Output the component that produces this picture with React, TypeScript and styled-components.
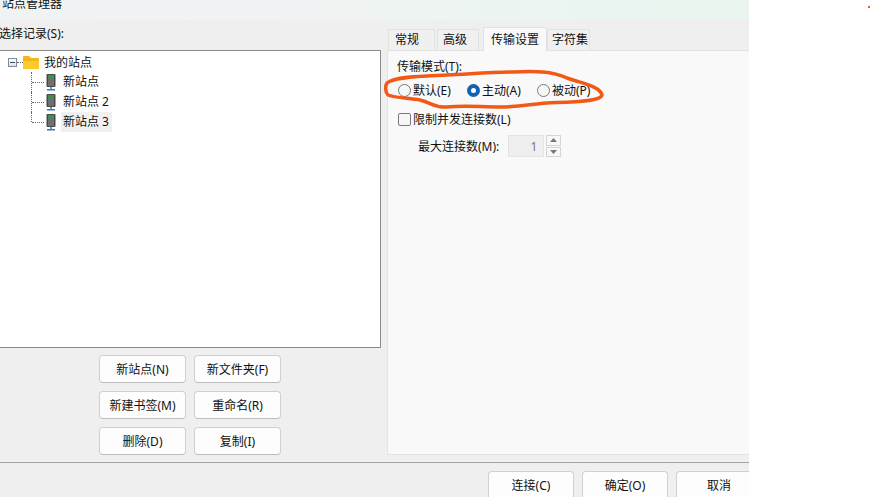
import React from "react";
import styled, { createGlobalStyle } from "styled-components";

const Global = createGlobalStyle`
  html, body { margin: 0; padding: 0; background: #fff; }
  body { font-family: "Noto Sans", "Noto Sans CJK SC", sans-serif; font-size: 12px; color: #111; }
  #root { width: 871px; height: 497px; overflow: hidden; }
`;

const Page = styled.div`
  position: relative;
  width: 871px;
  height: 497px;
  overflow: hidden;
  background: #fff;
`;
const Win = styled.div`
  width: 749px;
  height: 497px;
  display: flex;
  flex-direction: column;
  background: #efefef;
`;
const TitleBar = styled.div`
  height: 20px;
  flex: none;
  display: flex;
  align-items: center;
  padding-left: 2px;
  font-size: 12px;
  line-height: 10px;
  background: linear-gradient(90deg, #f0f3f3 0%, #eff4f3 50%, #e9f5f0 85%, #ebf5ef 100%);
  overflow: hidden;
  & > span { margin-top: -12px; }
`;
const Body = styled.div`
  height: 443px;
  flex: none;
  display: flex;
  border-bottom: 1px solid #a4a4a4;
  box-sizing: border-box;
`;
const LeftCol = styled.div`
  width: 381px;
  flex: none;
  display: flex;
  flex-direction: column;
`;
const RecLabel = styled.div`
  height: 30px;
  line-height: 28px;
  flex: none;
  margin-left: -1px;
`;
const TreeBox = styled.div`
  height: 298px;
  flex: none;
  box-sizing: border-box;
  background: #fff;
  border-top: 1px solid #8a8a8a;
  border-right: 1px solid #8a8a8a;
  border-bottom: 1px solid #8a8a8a;
  padding-top: 1px;
`;
const RootRow = styled.div`
  height: 20px;
  display: flex;
  align-items: center;
  padding-left: 8px;
`;
const ExpandBox = styled.span`
  width: 7px;
  height: 7px;
  flex: none;
  border: 1px solid #7f8a99;
  background: linear-gradient(#fff, #dde2e8);
  display: flex;
  align-items: center;
  justify-content: center;
  &::after { content: ""; width: 5px; height: 1px; background: #3c4a60; }
`;
const HDots = styled.span`
  width: 6px;
  border-top: 1px dotted #666;
  flex: none;
`;
const ChildRow = styled.div<{ $last?: boolean }>`
  position: relative;
  height: 20px;
  display: flex;
  align-items: center;
  padding-left: 45px;
  &::before {
    content: "";
    position: absolute;
    left: 31px;
    top: 0;
    height: ${(p) => (p.$last ? "10px" : "20px")};
    border-left: 1px dotted #666;
  }
  &::after {
    content: "";
    position: absolute;
    left: 32px;
    top: 10px;
    width: 12px;
    border-top: 1px dotted #666;
  }
`;
const NodeLabel = styled.span<{ $sel?: boolean }>`
  margin-left: 4px;
  padding: 0 3px 0 2px;
  height: 20px;
  line-height: 19px;
  background: ${(p) => (p.$sel ? "#f0f0f0" : "transparent")};
`;
const RootLabel = styled.span`
  margin-left: 5px;
  line-height: 19px;
`;
const ButtonGrid = styled.div`
  display: grid;
  grid-template-columns: 87px 87px;
  grid-auto-rows: 28px;
  gap: 8px;
  padding: 7px 0 0 99px;
`;
const Btn = styled.div`
  box-sizing: border-box;
  border: 1px solid #d0d0d0;
  border-bottom-color: #bdbdbd;
  border-radius: 4px;
  background: #fdfdfd;
  display: flex;
  align-items: center;
  justify-content: center;
  white-space: nowrap;
`;
const RightCol = styled.div`
  margin-left: 6px;
  flex: 1;
  display: flex;
  flex-direction: column;
`;
const Tabs = styled.div`
  height: 30px;
  flex: none;
  display: flex;
  align-items: flex-end;
  padding-left: 1px;
`;
const Tab = styled.div<{ $active?: boolean; $w: number; $gap?: number; $pad: number }>`
  width: ${(p) => p.$w}px;
  height: ${(p) => (p.$active ? 24 : 21)}px;
  box-sizing: border-box;
  background: ${(p) => (p.$active ? "#f9f9f9" : "#f0f0f0")};
  border: 1px solid #e2e2e2;
  border-bottom: none;
  margin-left: ${(p) => p.$gap ?? 0}px;
  padding-left: ${(p) => p.$pad}px;
  display: flex;
  align-items: center;
  line-height: 18px;
  position: relative;
  z-index: ${(p) => (p.$active ? 1 : 0)};
  margin-bottom: ${(p) => (p.$active ? -1 : 0)}px;
  white-space: nowrap;
`;
const TabPanel = styled.div`
  height: 405px;
  flex: none;
  box-sizing: border-box;
  background: #f9f9f9;
  border-top: 1px solid #e2e2e2;
  border-bottom: 1px solid #e2e2e2;
  border-left: 1px solid #e6e6e6;
  padding: 7px 0 0 10px;
  display: flex;
  flex-direction: column;
`;
const GroupLabel = styled.div`
  height: 18px;
  line-height: 17px;
  margin-left: -1px;
`;
const RadioRow = styled.div`
  display: flex;
  align-items: center;
  margin-top: 5px;
  height: 18px;
`;
const RadioItem = styled.div<{ $w: number }>`
  width: ${(p) => p.$w}px;
  display: flex;
  align-items: center;
  gap: 2px;
  white-space: nowrap;
`;
const Radio = styled.span<{ $on?: boolean }>`
  width: 13px;
  height: 13px;
  flex: none;
  box-sizing: border-box;
  border-radius: 50%;
  border: ${(p) => (p.$on ? "4px solid #0f62b0" : "1px solid #7a7a7a")};
  background: ${(p) => (p.$on ? "#fff" : "#f7f7f7")};
`;
const CheckRow = styled.div`
  display: flex;
  align-items: center;
  gap: 2px;
  margin-top: 11px;
  height: 18px;
`;
const Check = styled.span`
  width: 13px;
  height: 13px;
  box-sizing: border-box;
  flex: none;
  border: 1px solid #7a7a7a;
  border-radius: 2px;
  background: #f7f7f7;
`;
const MaxRow = styled.div`
  display: flex;
  align-items: center;
  margin-top: 7px;
  padding-left: 20px;
  height: 22px;
`;
const NumInput = styled.div`
  width: 36px;
  height: 22px;
  box-sizing: border-box;
  margin-left: 9px;
  background: #efefef;
  border: 1px solid #e4e4e4;
  display: flex;
  align-items: center;
  justify-content: flex-end;
  padding-right: 6px;
  color: #7a7a7a;
`;
const Spin = styled.div`
  display: flex;
  flex-direction: column;
  gap: 1px;
  margin-left: 2px;
`;
const SpinBtn = styled.div`
  width: 15px;
  height: 10.5px;
  box-sizing: border-box;
  border: 1px solid #d4d4d4;
  background: #f8f8f8;
  display: flex;
  align-items: center;
  justify-content: center;
`;
const Footer = styled.div`
  flex: 1;
  display: flex;
  gap: 8px;
  padding: 8px 0 0 488px;
  overflow: hidden;
`;
const FootBtn = styled(Btn)`
  width: 86px;
  height: 34px;
  flex: none;
  padding-bottom: 7px;
  border-bottom: none;
  border-radius: 4px 4px 0 0;
`;
const Scribble = styled.svg`
  position: absolute;
  left: 0;
  top: 0;
  pointer-events: none;
`;

const Folder = () => (
  <svg width="16" height="15" viewBox="0 0 16 15" style={{ flex: "none" }}>
    <path d="M0 2 Q0 1 1 1 H6 L8 3 H15 Q16 3 16 4 V13 Q16 14 15 14 H1 Q0 14 0 13 Z" fill="#f5b417" />
    <path d="M0 6 H16 V13 Q16 14 15 14 H1 Q0 14 0 13 Z" fill="#fdc92c" />
  </svg>
);
const Server = () => (
  <svg width="12" height="17" viewBox="0 0 12 17" style={{ flex: "none" }}>
    <rect x="1.5" y="0" width="9" height="13" rx="1" fill="#4a4a4a" />
    <rect x="3" y="1" width="6" height="3" fill="#2b9a45" />
    <rect x="3" y="4" width="6" height="8" fill="#6f6f6f" />
    <rect x="5.3" y="13" width="1.5" height="3" fill="#3b78c4" />
    <rect x="2" y="15" width="8" height="1.5" fill="#3b78c4" />
  </svg>
);

const sites = ["新站点", "新站点 2", "新站点 3"];
const leftButtons = ["新站点(N)", "新文件夹(F)", "新建书签(M)", "重命名(R)", "删除(D)", "复制(I)"];

export default function App() {
  return (
    <Page>
      <Global />
      <Win>
        <TitleBar><span>站点管理器</span></TitleBar>
        <Body>
          <LeftCol>
            <RecLabel>选择记录(S):</RecLabel>
            <TreeBox>
              <RootRow>
                <ExpandBox />
                <HDots />
                <Folder />
                <RootLabel>我的站点</RootLabel>
              </RootRow>
              <div>
                {sites.map((s, i) => (
                  <ChildRow key={s} $last={i === sites.length - 1}>
                    <Server />
                    <NodeLabel $sel={i === 2}>{s}</NodeLabel>
                  </ChildRow>
                ))}
              </div>
            </TreeBox>
            <ButtonGrid>
              {leftButtons.map((b) => <Btn key={b}>{b}</Btn>)}
            </ButtonGrid>
          </LeftCol>
          <RightCol>
            <Tabs>
              <Tab $w={47} $pad={6}>常规</Tab>
              <Tab $w={42} $gap={2} $pad={5}>高级</Tab>
              <Tab $w={64} $gap={4} $pad={7} $active>传输设置</Tab>
              <Tab $w={43} $pad={4}>字符集</Tab>
            </Tabs>
            <TabPanel>
              <GroupLabel>传输模式(T):</GroupLabel>
              <RadioRow>
                <RadioItem $w={69}><Radio />默认(E)</RadioItem>
                <RadioItem $w={70}><Radio $on />主动(A)</RadioItem>
                <RadioItem $w={70}><Radio />被动(P)</RadioItem>
              </RadioRow>
              <CheckRow><Check />限制并发连接数(L)</CheckRow>
              <MaxRow>
                最大连接数(M):
                <NumInput>1</NumInput>
                <Spin>
                  <SpinBtn>
                    <svg width="7" height="4" viewBox="0 0 7 4"><path d="M3.5 0 L7 4 H0 Z" fill="#777" /></svg>
                  </SpinBtn>
                  <SpinBtn>
                    <svg width="7" height="4" viewBox="0 0 7 4"><path d="M0 0 H7 L3.5 4 Z" fill="#777" /></svg>
                  </SpinBtn>
                </Spin>
              </MaxRow>
            </TabPanel>
          </RightCol>
        </Body>
        <Footer>
          <FootBtn>连接(C)</FootBtn>
          <FootBtn>确定(O)</FootBtn>
          <FootBtn>取消</FootBtn>
        </Footer>
      </Win>
      <Scribble width="871" height="497" viewBox="0 0 871 497">
        <path
          d="M387 83 C395 76 430 76 447 75 C470 74 490 72 513 72 C535 71 552 71 567 78 C580 83 600 86 602 95 C601 102 570 102 547 103 C530 104 522 107 500 107 C480 107 465 105 447 107 C435 108 432 103 420 100 C410 98 395 98 388 95 C385 92 385 86 387 83 Z"
          fill="none"
          stroke="#f15a16"
          strokeWidth="3.5"
          strokeLinejoin="round"
        />
        <rect x="868" y="6" width="2" height="2" fill="#f15a16" />
      </Scribble>
    </Page>
  );
}
